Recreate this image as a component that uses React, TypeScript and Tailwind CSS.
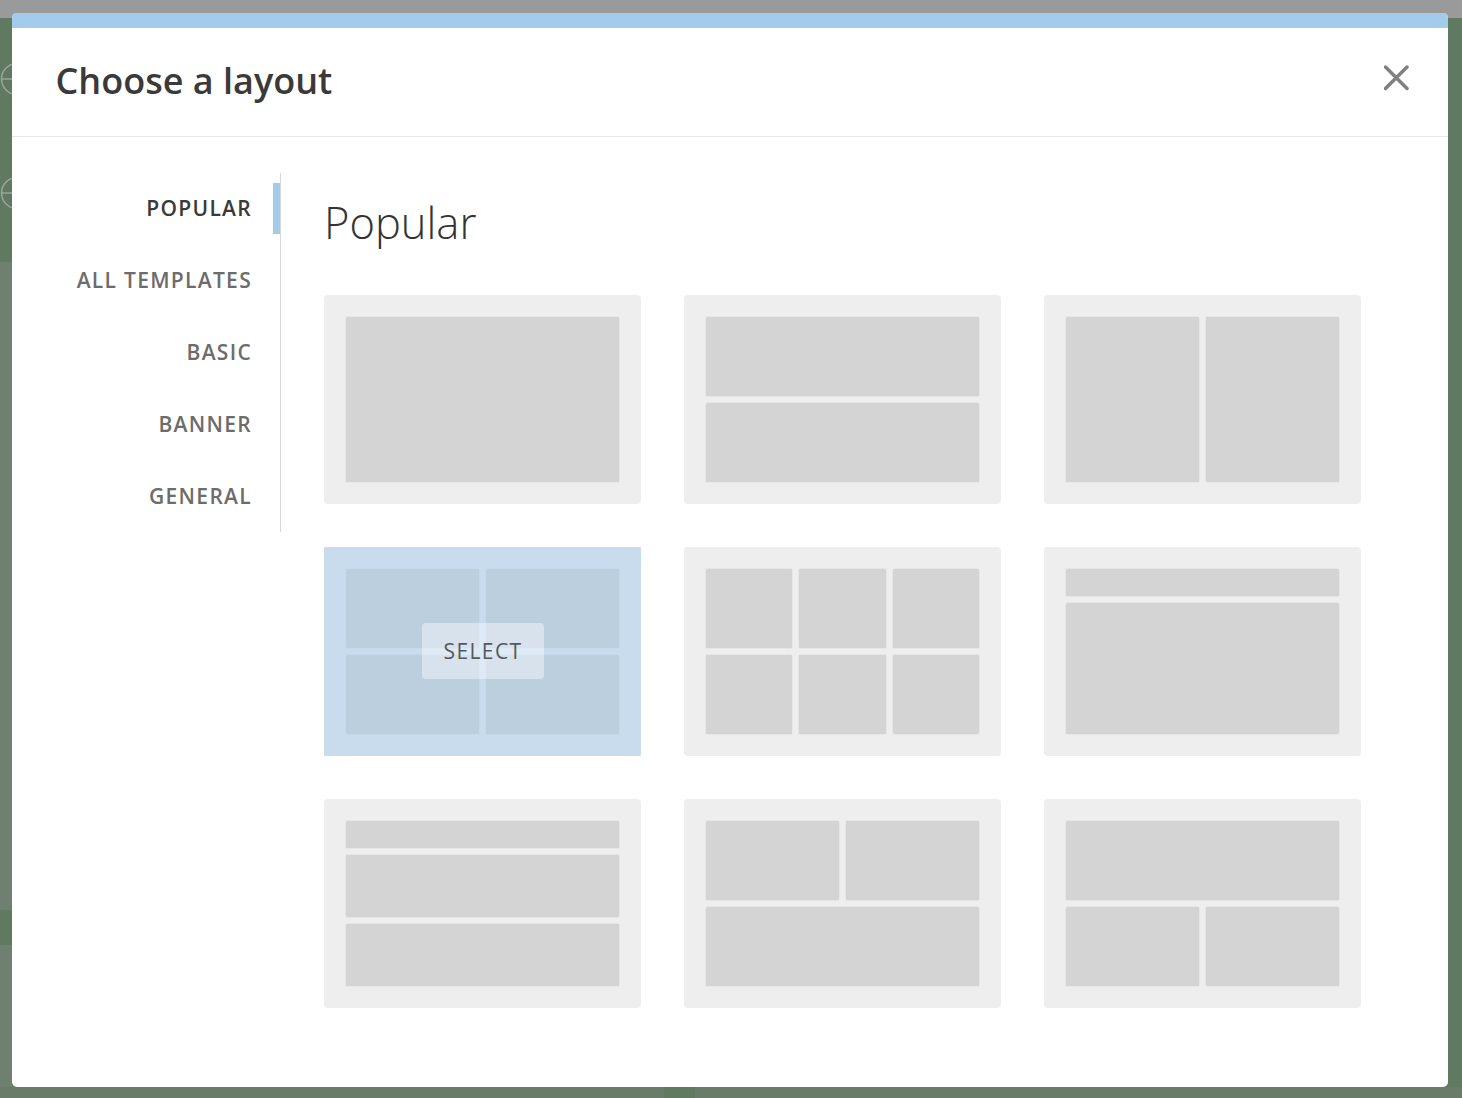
const NAV = ["POPULAR", "ALL TEMPLATES", "BASIC", "BANNER", "GENERAL"];

const Cell = ({ hover, className = "" }: { hover?: boolean; className?: string }) => (
  <div
    className={`rounded-[1px] ${
      hover ? "bg-[#bccfdf] shadow-[0_0_0_0.5px_#c2d5e6]" : "bg-[#d4d4d4] shadow-[0_0_0_0.5px_#dedede]"
    } ${className}`}
  />
);

const Card = ({
  grid,
  cells,
  hover,
}: {
  grid: string;
  cells: string[];
  hover?: boolean;
}) => (
  <div
    className={`relative h-[209px] p-[22px] ${
      hover ? "rounded-[1px] bg-[#c8dcee]" : "rounded-[4px] bg-[#eeeeee]"
    }`}
  >
    <div className={`grid h-full gap-[7px] ${grid}`}>
      {cells.map((c, i) => (
        <Cell key={i} hover={hover} className={c} />
      ))}
    </div>
    {hover && (
      <div className="absolute left-[98px] top-[76px] flex h-[56px] w-[122px] items-center justify-center rounded-[4px] bg-white/40 pt-[2px] text-[21px] font-medium tracking-[1.4px] text-[#55595c]">
        SELECT
      </div>
    )}
  </div>
);

// the page behind the dialog, only slivers of it show
const Ring = ({ className }: { className: string }) => (
  <svg className={`absolute left-0 ${className}`} width="12" height="34" viewBox="0 0 12 34" fill="none">
    <circle cx="17" cy="17" r="15.5" stroke="#9aa69b" strokeWidth="1.5" />
    <path d="M1 17H12" stroke="#9aa69b" strokeWidth="1.5" />
  </svg>
);

export default function App() {
  return (
    <div
      className="relative h-[1098px] w-[1462px] overflow-hidden bg-[#5f7a61]"
      style={{ fontFamily: '"Open Sans", "Noto Sans", sans-serif' }}
    >
      <div className="absolute left-0 top-0 h-[18px] w-full bg-[#9a9a9a]" />
      <div className="absolute left-0 top-[262px] h-[648px] w-[12px] bg-[#6f7f70]" />
      <div className="absolute left-0 top-[945px] h-[153px] w-[12px] bg-[#6f7f70]" />
      <div className="absolute bottom-0 left-0 h-[11px] w-[664px] bg-[#6b7b69]" />
      <div className="absolute bottom-0 left-[695px] h-[11px] w-[767px] bg-[#6b7b69]" />
      <Ring className="top-[62px]" />
      <Ring className="top-[176px]" />

      <div className="relative ml-[12px] mt-[13px] flex h-[1074px] w-[1436px] flex-col overflow-hidden rounded-[5px] bg-white">
        <div className="h-[15px] bg-[#a2cbec]" />
        <div className="flex h-[109px] items-start justify-between border-b border-[#e6e6e6] pl-[43.5px] pr-[38px]">
          <h1 className="mt-[29px] text-[36px] font-semibold leading-[48px] text-[#3a3a3a]">
            Choose a layout
          </h1>
          <svg className="mt-[37px]" width="26" height="26" viewBox="0 0 26 26" fill="none">
            <path d="M1.5 2L23 23.5M23 2L1.5 23.5" stroke="#808080" strokeWidth="3.5" strokeLinecap="round" />
          </svg>
        </div>

        <div className="flex flex-1 items-start">
          <nav className="mt-[36px] flex h-[359px] w-[269px] flex-col items-end gap-[40px] border-r border-[#d8d8d8] pt-[19px]">
            {NAV.map((n, i) => (
              <div
                key={n}
                className={`relative pr-[28px] text-[21px] font-semibold leading-[32px] tracking-[1.3px] ${
                  i === 0 ? "text-[#3a3a3a]" : "text-[#6c6c6c]"
                }`}
              >
                {n}
                {i === 0 && <div className="absolute right-0 top-[-9px] h-[51px] w-[7px] bg-[#a2cbec]" />}
              </div>
            ))}
          </nav>

          <main className="ml-[43px] mt-[57px] w-[1037px]">
            <h2 className="text-[43.5px] font-light leading-[58px] text-[#333333]">Popular</h2>
            <div className="mt-[43px] grid grid-cols-[317px_317px_317px] gap-[43px]">
              <Card grid="grid-cols-1" cells={[""]} />
              <Card grid="grid-rows-2" cells={["", ""]} />
              <Card grid="grid-cols-2" cells={["", ""]} />
              <Card grid="grid-cols-2 grid-rows-2" cells={["", "", "", ""]} hover />
              <Card grid="grid-cols-3 grid-rows-2" cells={["", "", "", "", "", ""]} />
              <Card grid="grid-rows-[27px_1fr]" cells={["", ""]} />
              <Card grid="grid-rows-[27px_1fr_1fr]" cells={["", "", ""]} />
              <Card grid="grid-cols-2 grid-rows-2" cells={["", "", "col-span-2"]} />
              <Card grid="grid-cols-2 grid-rows-2" cells={["col-span-2", "", ""]} />
            </div>
          </main>
        </div>
      </div>
    </div>
  );
}
